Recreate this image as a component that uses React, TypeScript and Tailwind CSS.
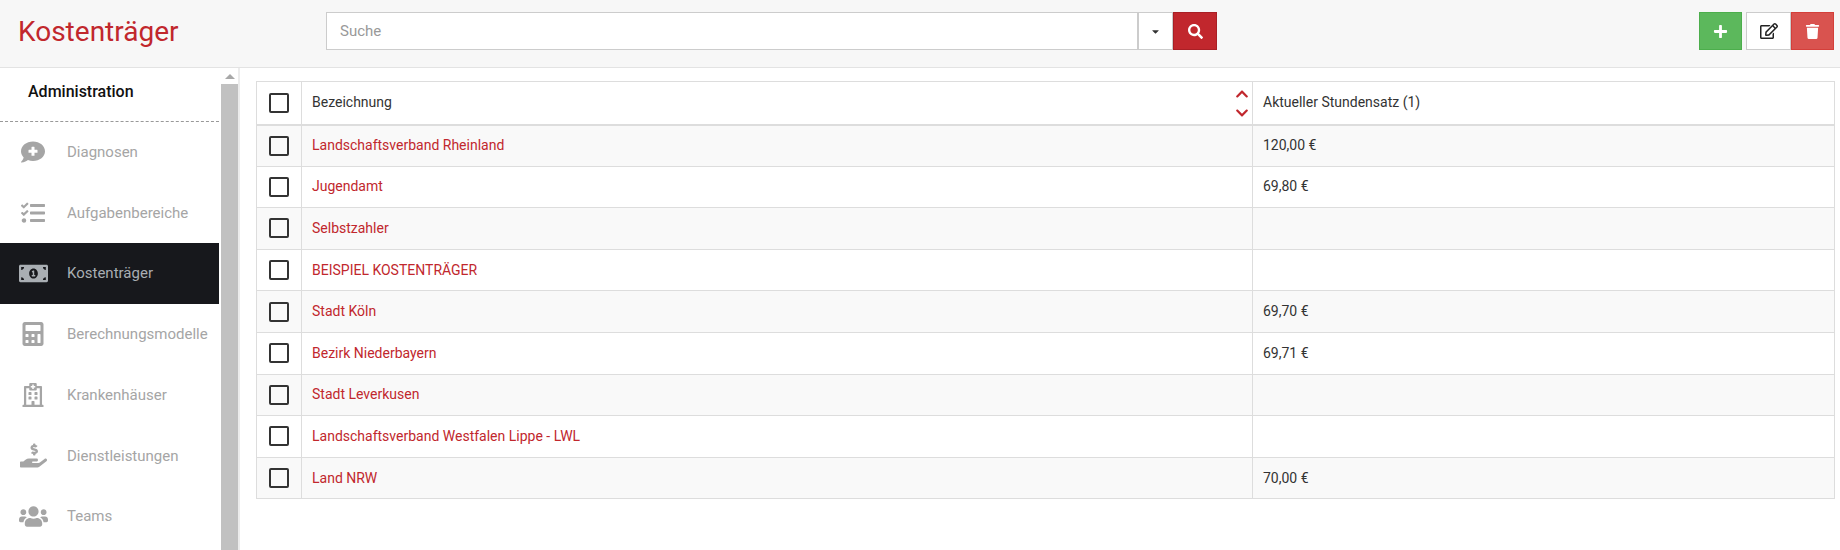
import { FaCommentMedical, FaTasks, FaMoneyBillAlt, FaCalculator, FaRegHospital, FaHandHoldingUsd, FaUsers, FaSearch, FaPlus, FaRegEdit, FaTrash, FaCaretDown, FaChevronUp, FaChevronDown } from "react-icons/fa";

const menuItems = [
  { label: "Diagnosen", icon: FaCommentMedical, size: "text-[24px]" },
  { label: "Aufgabenbereiche", icon: FaTasks, size: "text-[24px]" },
  { label: "Kostenträger", icon: FaMoneyBillAlt, size: "text-[29px]", active: true },
  { label: "Berechnungsmodelle", icon: FaCalculator, size: "text-[24px]" },
  { label: "Krankenhäuser", icon: FaRegHospital, size: "text-[24px]" },
  { label: "Dienstleistungen", icon: FaHandHoldingUsd, size: "text-[27px]" },
  { label: "Teams", icon: FaUsers, size: "text-[29px]" },
];

const rows = [
  { name: "Landschaftsverband Rheinland", rate: "120,00 €" },
  { name: "Jugendamt", rate: "69,80 €" },
  { name: "Selbstzahler", rate: "" },
  { name: "BEISPIEL KOSTENTRÄGER", rate: "" },
  { name: "Stadt Köln", rate: "69,70 €" },
  { name: "Bezirk Niederbayern", rate: "69,71 €" },
  { name: "Stadt Leverkusen", rate: "" },
  { name: "Landschaftsverband Westfalen Lippe - LWL", rate: "" },
  { name: "Land NRW", rate: "70,00 €" },
];

function Checkbox() {
  return <div className="w-5 h-5 rounded-[2px] border-2 border-[#333333] mx-auto" />;
}

export default function App() {
  return (
    <div className="h-[550px] w-[1840px] overflow-hidden bg-white flex flex-col font-['Roboto',sans-serif] text-[14px] text-[#333333]">
      {/* Top bar */}
      <div className="h-[68px] shrink-0 bg-[#f7f7f7] border-b border-[#e3e3e3] flex items-start">
        <h1 className="w-[326px] pl-[18px] pt-[13px] text-[28px] leading-[38px] text-[#c1272d]">Kostenträger</h1>
        <div className="mt-3 flex h-[38px] w-[891px]">
          <div className="w-[812px] border border-[#cccccc] bg-white pl-[13px] text-[#999999] text-[15px] leading-[36px]">Suche</div>
          <div className="w-[35px] border border-[#cccccc] bg-white flex items-center justify-center text-[#333333] text-[11px]">
            <FaCaretDown />
          </div>
          <div className="w-[44px] border border-[#a91f25] bg-[#c1272d] flex items-center justify-center text-white text-[15px]">
            <FaSearch />
          </div>
        </div>
        <div className="ml-auto mr-[6px] mt-3 flex h-[38px]">
          <div className="w-[43px] border border-[#4cae4c] bg-[#5cb85c] flex items-center justify-center text-white text-[15px]">
            <FaPlus />
          </div>
          <div className="ml-1 w-[45px] border border-[#cccccc] bg-white flex items-center justify-center text-[#222222] text-[18px]">
            <FaRegEdit />
          </div>
          <div className="w-[43px] border border-[#d43f3a] bg-[#d9534f] flex items-center justify-center text-white text-[15px]">
            <FaTrash />
          </div>
        </div>
      </div>

      <div className="flex flex-1 min-h-0">
        {/* Sidebar */}
        <div className="w-[219px] shrink-0">
          <div className="h-[54px] border-b border-dashed border-[#999999] pl-[28px] pt-[14px] text-[16px] leading-[20px] font-medium text-[#111111]">
            Administration
          </div>
          {menuItems.map((item) => {
            const Icon = item.icon;
            return (
              <div
                key={item.label}
                className={`h-[60.7px] flex items-center ${item.active ? "bg-[#17181c] text-[#a9aeb3]" : "text-[#a5a5a5]"}`}
              >
                <div className={`w-[67px] pr-[1px] flex justify-center ${item.size}`}>
                  <Icon />
                </div>
                <span className="text-[15px] whitespace-nowrap">{item.label}</span>
              </div>
            );
          })}
        </div>

        {/* Scrollbar */}
        <div className="ml-[2px] w-[17px] shrink-0 bg-[#c1c1c1] relative">
          <div className="h-[16px] bg-white flex items-center justify-center">
            <div className="w-0 h-0 border-x-[5px] border-x-transparent border-b-[5px] border-b-[#a8a8a8]" />
          </div>
        </div>
        <div className="w-[2px] shrink-0 bg-[#ececec]" />

        {/* Table */}
        <div className="flex-1 pl-4 pr-[5px] pt-[13px]">
          <table className="w-full border-collapse border border-[#dddddd] table-fixed">
            <thead>
              <tr className="h-[43px] border-b-2 border-[#dddddd]">
                <th className="w-[45px] border border-[#dddddd] font-normal"><Checkbox /></th>
                <th className="w-[951px] border border-[#dddddd] font-normal text-left pl-[10px] relative">
                  Bezeichnung
                  <div className="absolute right-[3px] top-[5px] flex flex-col gap-[5px] text-[#c1272d] text-[14px]">
                    <FaChevronUp />
                    <FaChevronDown />
                  </div>
                </th>
                <th className="border border-[#dddddd] font-normal text-left pl-[10px]">Aktueller Stundensatz (1)</th>
              </tr>
            </thead>
            <tbody>
              {rows.map((row, i) => (
                <tr key={row.name} className={`h-[41.6px] ${i % 2 === 0 ? "bg-[#f9f9f9]" : "bg-white"}`}>
                  <td className="border border-[#dddddd]"><Checkbox /></td>
                  <td className="border border-[#dddddd] pl-[10px] text-[#c1272d]">{row.name}</td>
                  <td className="border border-[#dddddd] pl-[10px]">{row.rate}</td>
                </tr>
              ))}
            </tbody>
          </table>
        </div>
      </div>
    </div>
  );
}
